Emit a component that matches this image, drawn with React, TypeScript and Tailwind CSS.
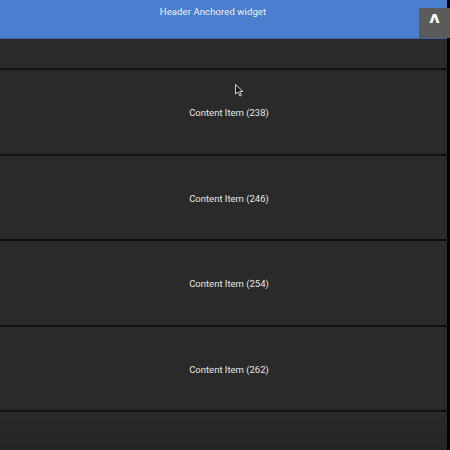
const items = [238, 246, 254, 262];

export default function App() {
  return (
    <div className="relative w-[450px] h-[450px] overflow-hidden flex bg-black font-['Roboto',sans-serif]">
      <div className="w-[447px] h-full flex flex-col bg-[#2a2a2a]">
        <div className="relative h-[39px] shrink-0 bg-[#4a7fcf] border-b border-[#3a64a8]">
          <div className="pt-[5px] pr-[21px] text-center text-[9.5px] text-[#eef2fa] tracking-[0.1px]">
            Header Anchored widget
          </div>
          <button className="absolute right-[-3px] top-[8px] w-[31px] h-[30px] bg-[#5b5b5b] flex items-start justify-center pt-[2px] text-white text-[16px] font-bold leading-none font-['DejaVu_Sans',sans-serif]">
            ʌ
          </button>
        </div>
        <div className="h-[31px] shrink-0 border-b-2 border-[#121212]" />
        {items.map((n) => (
          <div
            key={n}
            className="h-[85.5px] shrink-0 border-b-2 border-[#121212] flex items-center justify-center pl-[11px] pt-[3px] text-[9.5px] text-[#e6e6e6]"
          >
            Content Item ({n})
          </div>
        ))}
        <div className="flex-1 bg-gradient-to-b from-[#2a2a2a] to-[#242424]" />
      </div>
      {/* mouse pointer */}
      <svg className="absolute left-[235px] top-[84px]" width="9" height="13" viewBox="0 0 9 13">
        <path d="M0.5 0.5 L0.5 10 L3 8 L5 12 L6.5 11.3 L4.6 7.5 L8 7.5 Z" fill="#1a1a1a" stroke="#d0d0d0" strokeWidth="1" />
      </svg>
    </div>
  );
}
